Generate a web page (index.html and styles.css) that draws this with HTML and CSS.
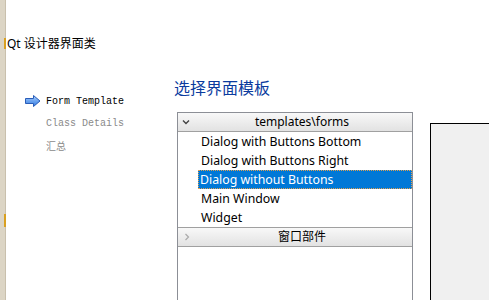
FILE: index.html
```html
<!DOCTYPE html>
<html lang="zh-CN">
<head>
    <meta charset="UTF-8">
    <title>Qt 设计器界面类</title>
    <link rel="stylesheet" href="styles.css">
</head>
<body>
    <div class="page">
        <div class="strip"><span class="tick tick-top"></span><span class="tick tick-low"></span></div>
        <div class="main">
            <div class="title">Qt 设计器界面类</div>
            <div class="body">
                <ul class="nav">
                    <li class="nav-item current">
                        <svg class="arrow" width="16" height="12" viewBox="0 0 16 12">
                            <defs>
                                <linearGradient id="ag" x1="0" y1="0" x2="0" y2="1">
                                    <stop offset="0" stop-color="#a9d0ff"/>
                                    <stop offset="1" stop-color="#2f78e0"/>
                                </linearGradient>
                            </defs>
                            <path d="M0.5 3.5 H8.5 V0.5 L15 6 L8.5 11.5 V8.5 H0.5 Z" fill="url(#ag)" stroke="#2a5db8" stroke-width="1" stroke-linejoin="round"/>
                        </svg>
                        Form Template
                    </li>
                    <li class="nav-item">Class Details</li>
                    <li class="nav-item">汇总</li>
                </ul>
                <div class="content">
                    <h2 class="heading">选择界面模板</h2>
                    <div class="panes">
                        <div class="tree">
                            <div class="group first">
                                <svg class="chev" width="8" height="6" viewBox="0 0 8 6"><path d="M1 1.5 L4 4.5 L7 1.5" fill="none" stroke="#444" stroke-width="1.4"/></svg>
                                templates\forms
                            </div>
                            <div class="item">Dialog with Buttons Bottom</div>
                            <div class="item">Dialog with Buttons Right</div>
                            <div class="item selected">Dialog without Buttons</div>
                            <div class="item">Main Window</div>
                            <div class="item">Widget</div>
                            <div class="group">
                                <svg class="chev" width="6" height="8" viewBox="0 0 6 8"><path d="M1.5 1 L4.5 4 L1.5 7" fill="none" stroke="#aaa" stroke-width="1.2"/></svg>
                                窗口部件
                            </div>
                        </div>
                        <div class="preview"></div>
                    </div>
                </div>
            </div>
        </div>
    </div>
</body>
</html>
```

FILE: styles.css
```css
body {
    margin: 0;
    background: #fff;
    font-family: "Noto Sans", "Noto Sans CJK SC", sans-serif;
    font-size: 12px;
    color: #000;
}
.page {
    display: flex;
    height: 300px;
    overflow: hidden;
}
.strip {
    position: relative;
    width: 5px;
    background: #dcd5c5;
    border-right: 1px solid #c9c0ad;
    flex-shrink: 0;
}
.tick {
    position: absolute;
    right: -1px;
    width: 2px;
    background: #d9a020;
}
.tick-top {
    top: 38px;
    height: 11px;
}
.tick-low {
    top: 214px;
    height: 13px;
}
.main {
    flex: 1;
    padding-left: 1px;
}
.title {
    margin-top: 36px;
    height: 16px;
    line-height: 16px;
    font-family: "Noto Sans", "Noto Sans CJK SC", sans-serif;
    font-size: 12px;
}
.body {
    display: flex;
    margin-top: 26px;
}
.nav {
    list-style: none;
    margin: 0;
    padding: 12px 0 0 0;
    width: 167px;
    flex-shrink: 0;
}
.nav-item {
    display: flex;
    align-items: center;
    height: 22px;
    padding-left: 39px;
    font-family: "Liberation Mono", "Noto Sans CJK SC", monospace;
    font-size: 10px;
    color: #8a8a8a;
}
.nav-item.current {
    padding-left: 18px;
    color: #000;
}
.arrow {
    margin-right: 5px;
}
.content {
    flex: 1;
}
.heading {
    margin: 0;
    height: 18px;
    line-height: 18px;
    font-size: 16px;
    font-weight: normal;
    color: #0b3b9e;
    font-family: "Noto Sans CJK SC", sans-serif;
}
.panes {
    display: flex;
    align-items: flex-start;
    margin-top: 16px;
}
.tree {
    width: 234px;
    height: 220px;
    margin-left: 3px;
    border: 1px solid #8c8f96;
    flex-shrink: 0;
}
.group {
    position: relative;
    height: 18px;
    line-height: 18px;
    padding-left: 14px;
    text-align: center;
    background: linear-gradient(#f8f8f8, #e2e2e2);
    border-top: 1px solid #a0a0a0;
    border-bottom: 1px solid #a0a0a0;
}
.group.first {
    border-top: none;
}
.chev {
    position: absolute;
    left: 4px;
    top: 6px;
}
.group:not(.first) .chev {
    left: 6px;
    top: 5px;
}
.item {
    height: 19px;
    line-height: 19px;
    padding-left: 23px;
    white-space: nowrap;
    font-size: 12.3px;
}
.item.selected {
    margin-left: 20px;
    padding-left: 2px;
    background: #0078d7;
    color: #fff;
    outline: 1px dotted #e0a050;
    outline-offset: -1px;
}
.preview {
    flex: 1;
    height: 200px;
    margin: 11px 0 0 17px;
    border: 1px solid #000;
    border-right: none;
    background: #f0f0f0;
}
```
